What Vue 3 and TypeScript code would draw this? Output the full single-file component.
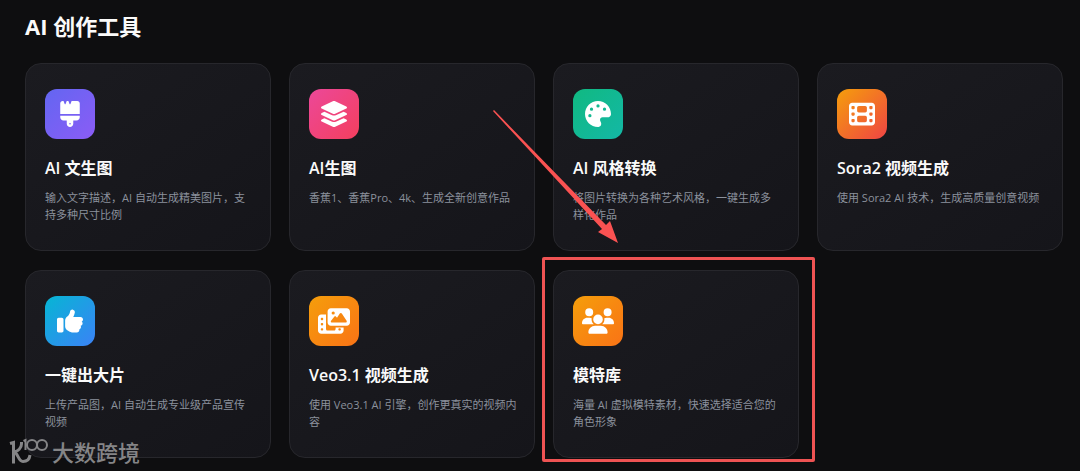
<script setup lang="ts">
interface Tool {
  name: string
  description: string
  tone: string
  viewBox: string
  icon: string
  pointer?: boolean
  highlighted?: boolean
}

const tools: Tool[] = [
  {
    name: 'AI 文生图',
    description: '输入文字描述，AI 自动生成精美图片，支持多种尺寸比例',
    tone: 'violet',
    viewBox: '0 0 384 512',
    icon: 'M162.4 6c-1.5-3.6-5-6-8.9-6h-19c-3.9 0-7.5 2.4-8.9 6L104.9 57.7c-3.2 8-14.6 8-17.8 0L66.4 6c-1.5-3.6-5-6-8.9-6H48C21.5 0 0 21.5 0 48V256H384V48c0-26.5-21.5-48-48-48H230.5c-3.9 0-7.5 2.4-8.9 6L200.9 57.7c-3.2 8-14.6 8-17.8 0L162.4 6zM0 288v32c0 35.3 28.7 64 64 64h64v64c0 35.3 28.7 64 64 64s64-28.7 64-64V384h64c35.3 0 64-28.7 64-64V288H0zM192 432a16 16 0 1 1 0 32 16 16 0 1 1 0-32z',
  },
  {
    name: 'AI生图',
    description: '香蕉1、香蕉Pro、4k、生成全新创意作品',
    tone: 'pink',
    viewBox: '0 0 576 512',
    icon: 'M264.5 5.2c14.9-6.9 32.1-6.9 47 0l218.6 101c8.5 3.9 13.9 12.4 13.9 21.8s-5.4 17.9-13.9 21.8l-218.6 101c-14.9 6.9-32.1 6.9-47 0L45.9 149.8C37.4 145.8 32 137.3 32 128s5.4-17.9 13.9-21.8L264.5 5.2zM476.9 209.6l53.2 24.6c8.5 3.9 13.9 12.4 13.9 21.8s-5.4 17.9-13.9 21.8l-218.6 101c-14.9 6.9-32.1 6.9-47 0L45.9 277.8C37.4 273.8 32 265.3 32 256s5.4-17.9 13.9-21.8l53.2-24.6 152 70.2c23.4 10.8 50.4 10.8 73.8 0l152-70.2zm-152 198.2l152-70.2 53.2 24.6c8.5 3.9 13.9 12.4 13.9 21.8s-5.4 17.9-13.9 21.8l-218.6 101c-14.9 6.9-32.1 6.9-47 0L45.9 405.8C37.4 401.8 32 393.3 32 384s5.4-17.9 13.9-21.8l53.2-24.6 152 70.2c23.4 10.8 50.4 10.8 73.8 0z',
  },
  {
    name: 'AI 风格转换',
    description: '将图片转换为各种艺术风格，一键生成多样化作品',
    tone: 'green',
    viewBox: '0 0 512 512',
    icon: 'M512 256c0 .9 0 1.8 0 2.7c-.4 36.5-33.6 61.3-70.1 61.3H344c-26.5 0-48 21.5-48 48c0 3.4 .4 6.7 1 9.9c2.1 10.2 6.5 20 10.8 29.9c6.1 13.8 12.1 27.5 12.1 42c0 31.8-21.6 60.7-53.4 62c-3.5 .1-7 .2-10.6 .2C114.6 512 0 397.4 0 256S114.6 0 256 0S512 114.6 512 256zM128 288a32 32 0 1 0 -64 0 32 32 0 1 0 64 0zm0-96a32 32 0 1 0 0-64 32 32 0 1 0 0 64zM288 96a32 32 0 1 0 -64 0 32 32 0 1 0 64 0zm96 96a32 32 0 1 0 0-64 32 32 0 1 0 0 64z',
    pointer: true,
  },
  {
    name: 'Sora2 视频生成',
    description: '使用 Sora2 AI 技术，生成高质量创意视频',
    tone: 'sunset',
    viewBox: '0 0 512 512',
    icon: 'M0 96C0 60.7 28.7 32 64 32H448c35.3 0 64 28.7 64 64V416c0 35.3-28.7 64-64 64H64c-35.3 0-64-28.7-64-64V96zM48 368v32c0 8.8 7.2 16 16 16H96c8.8 0 16-7.2 16-16V368c0-8.8-7.2-16-16-16H64c-8.8 0-16 7.2-16 16zm368-16c-8.8 0-16 7.2-16 16v32c0 8.8 7.2 16 16 16h32c8.8 0 16-7.2 16-16V368c0-8.8-7.2-16-16-16H416zM48 240v32c0 8.8 7.2 16 16 16H96c8.8 0 16-7.2 16-16V240c0-8.8-7.2-16-16-16H64c-8.8 0-16 7.2-16 16zm368-16c-8.8 0-16 7.2-16 16v32c0 8.8 7.2 16 16 16h32c8.8 0 16-7.2 16-16V240c0-8.8-7.2-16-16-16H416zM48 112v32c0 8.8 7.2 16 16 16H96c8.8 0 16-7.2 16-16V112c0-8.8-7.2-16-16-16H64c-8.8 0-16 7.2-16 16zM416 96c-8.8 0-16 7.2-16 16v32c0 8.8 7.2 16 16 16h32c8.8 0 16-7.2 16-16V112c0-8.8-7.2-16-16-16H416zM160 128v64c0 17.7 14.3 32 32 32H320c17.7 0 32-14.3 32-32V128c0-17.7-14.3-32-32-32H192c-17.7 0-32 14.3-32 32zm32 160c-17.7 0-32 14.3-32 32v64c0 17.7 14.3 32 32 32H320c17.7 0 32-14.3 32-32V320c0-17.7-14.3-32-32-32H192z',
  },
  {
    name: '一键出大片',
    description: '上传产品图，AI 自动生成专业级产品宣传视频',
    tone: 'blue',
    viewBox: '0 0 512 512',
    icon: 'M313.4 32.9c26 5.2 42.9 30.5 37.7 56.5l-2.3 11.4c-5.3 26.7-15.1 52.1-28.8 75.2H464c26.5 0 48 21.5 48 48c0 18.5-10.5 34.6-25.9 42.6C497 275.4 504 288.9 504 304c0 23.4-16.8 42.9-38.9 47.1c4.4 7.3 6.9 15.8 6.9 24.9c0 21.3-13.9 39.4-33.1 45.6c.7 3.3 1.1 6.8 1.1 10.4c0 26.5-21.5 48-48 48H294.5c-19 0-37.5-5.6-53.3-16.1l-38.5-25.7C176 420.4 160 390.4 160 358.3V247.1c0-29.2 13.3-56.7 36-75l7.4-5.9c26.5-21.2 44.6-51 51.2-84.2l2.3-11.4c5.2-26 30.5-42.9 56.5-37.7zM32 192H96c17.7 0 32 14.3 32 32V448c0 17.7-14.3 32-32 32H32c-17.7 0-32-14.3-32-32V224c0-17.7 14.3-32 32-32z',
  },
  {
    name: 'Veo3.1 视频生成',
    description: '使用 Veo3.1 AI 引擎，创作更真实的视频内容',
    tone: 'orange',
    viewBox: '0 0 640 512',
    icon: 'M256 0H576c35.3 0 64 28.7 64 64V288c0 35.3-28.7 64-64 64H256c-35.3 0-64-28.7-64-64V64c0-35.3 28.7-64 64-64zM476 106.7C471.5 100 464 96 456 96s-15.5 4-20 10.7l-56 84L362.7 169c-4.6-5.7-11.5-9-18.7-9s-14.2 3.3-18.7 9l-64 80c-5.8 7.2-6.9 17.1-2.9 25.4s12.4 13.6 21.6 13.6h80 48H552c8.9 0 17-4.9 21.2-12.7s3.7-17.3-1.2-24.6l-96-144zM336 96a32 32 0 1 0 -64 0 32 32 0 1 0 64 0zM64 128h96V384v32c0 17.7 14.3 32 32 32H320c17.7 0 32-14.3 32-32V384H512v64c0 35.3-28.7 64-64 64H64c-35.3 0-64-28.7-64-64V192c0-35.3 28.7-64 64-64zm8 64c-8.8 0-16 7.2-16 16v16c0 8.8 7.2 16 16 16H88c8.8 0 16-7.2 16-16V208c0-8.8-7.2-16-16-16H72zm0 104c-8.8 0-16 7.2-16 16v16c0 8.8 7.2 16 16 16H88c8.8 0 16-7.2 16-16V312c0-8.8-7.2-16-16-16H72zm0 104c-8.8 0-16 7.2-16 16v16c0 8.8 7.2 16 16 16H88c8.8 0 16-7.2 16-16V416c0-8.8-7.2-16-16-16H72zm336 16v16c0 8.8 7.2 16 16 16h16c8.8 0 16-7.2 16-16V416c0-8.8-7.2-16-16-16H424c-8.8 0-16 7.2-16 16z',
  },
  {
    name: '模特库',
    description: '海量 AI 虚拟模特素材，快速选择适合您的角色形象',
    tone: 'orange',
    viewBox: '0 0 640 512',
    icon: 'M144 0a80 80 0 1 1 0 160A80 80 0 1 1 144 0zM512 0a80 80 0 1 1 0 160A80 80 0 1 1 512 0zM0 298.7C0 239.8 47.8 192 106.7 192h42.7c15.9 0 31 3.5 44.6 9.7c-1.3 7.2-1.9 14.7-1.9 22.3c0 38.2 16.8 72.5 43.3 96c-.2 0-.4 0-.7 0H21.3C9.6 320 0 310.4 0 298.7zM405.3 320c-.2 0-.4 0-.7 0c26.6-23.5 43.3-57.8 43.3-96c0-7.6-.7-15-1.9-22.3c13.6-6.3 28.7-9.7 44.6-9.7h42.7C592.2 192 640 239.8 640 298.7c0 11.8-9.6 21.3-21.3 21.3H405.3zM224 224a96 96 0 1 1 192 0 96 96 0 1 1 -192 0zM128 485.3C128 411.7 187.7 352 261.3 352H378.7C452.3 352 512 411.7 512 485.3c0 14.7-11.9 26.7-26.7 26.7H154.7c-14.7 0-26.7-11.9-26.7-26.7z',
    highlighted: true,
  },
]
</script>

<template>
  <main class="page">
    <h1 class="heading">AI 创作工具</h1>
    <ul class="grid">
      <li v-for="tool in tools" :key="tool.name" class="cell">
        <a href="#" class="card">
          <span class="tile" :class="tool.tone">
            <svg class="icon" :viewBox="tool.viewBox" aria-hidden="true">
              <path :d="tool.icon" fill="currentColor" />
            </svg>
          </span>
          <h2 class="name">{{ tool.name }}</h2>
          <p class="description">{{ tool.description }}</p>
        </a>
        <svg v-if="tool.pointer" class="pointer" viewBox="0 0 126 134" aria-hidden="true">
          <path d="M0 1L1 0L113 115L117 111L125 133L105 122L109 119Z" fill="#fa5252" />
        </svg>
        <span v-if="tool.highlighted" class="highlight"></span>
      </li>
    </ul>
    <div class="watermark">
      <svg class="watermark-logo" viewBox="0 0 40 28" aria-hidden="true">
        <g fill="none" stroke="currentColor">
          <path d="M1 5.5L4.5 4.5V25.5" stroke-width="3" />
          <path d="M12.5 4V6C12.5 10 9 13.5 5 14C9 14.5 9 23.5 14 23.5C18 23.5 20.5 21 21 17" stroke-width="3" />
          <path d="M14.5 3L16.5 2V12" stroke-width="2" />
          <circle cx="23" cy="7" r="5" stroke-width="2" />
          <circle cx="33" cy="7" r="5" stroke-width="2" />
        </g>
      </svg>
      <span>大数跨境</span>
    </div>
  </main>
</template>

<style>
body {
  margin: 0;
  background: #0e0e10;
}
</style>

<style scoped>
.page {
  position: relative;
  box-sizing: border-box;
  padding: 11px 17px 14px 25px;
  font-family: "Open Sans", "Noto Sans CJK SC", sans-serif;
  color: #fafafa;
}

.heading {
  margin: 0 0 22px;
  font-size: 22px;
  line-height: 30px;
  font-weight: 700;
}

.grid {
  display: grid;
  grid-template-columns: repeat(4, minmax(0, 1fr));
  grid-auto-rows: 1fr;
  gap: 19px 18px;
  margin: 0;
  padding: 0;
  list-style: none;
}

.cell {
  position: relative;
  display: flex;
}

.card {
  flex: 1;
  box-sizing: border-box;
  min-width: 0;
  padding: 25px 17px 27px 19px;
  border: 1px solid #27272c;
  border-radius: 16px;
  background: linear-gradient(145deg, #1b1b20, #15151a);
  color: inherit;
  text-decoration: none;
}

.tile {
  display: flex;
  align-items: center;
  justify-content: center;
  width: 50px;
  height: 50px;
  border-radius: 12px;
  color: #fff;
}

.icon {
  width: 32px;
  height: 26px;
}

.violet { background: linear-gradient(135deg, #6366f1, #8b5cf6); }
.pink { background: linear-gradient(135deg, #ec4899, #f43f5e); }
.green { background: linear-gradient(135deg, #10b981, #14b8a6); }
.sunset { background: linear-gradient(135deg, #f59e0b, #ef4444); }
.blue { background: linear-gradient(135deg, #06b6d4, #3b82f6); }
.orange { background: linear-gradient(135deg, #f59e0b, #f97316); }

.name {
  margin: 17px 0 9px;
  font-size: 16px;
  line-height: 24px;
  font-weight: 600;
}

.description {
  margin: 0;
  font-size: 11px;
  line-height: 17px;
  color: #8b919c;
}

.pointer {
  position: absolute;
  z-index: 2;
  top: 47px;
  left: -60px;
  width: 126px;
  height: 134px;
  pointer-events: none;
}

.highlight {
  position: absolute;
  z-index: 2;
  inset: -13px -16px -4px -11px;
  border: 3px solid #ee5353;
  border-radius: 2px;
  pointer-events: none;
}

.watermark {
  position: absolute;
  left: 9px;
  bottom: 5px;
  display: flex;
  align-items: center;
  gap: 3px;
  font-size: 22px;
  line-height: 30px;
  font-weight: 500;
  color: #858587;
  pointer-events: none;
}

.watermark-logo {
  width: 40px;
  height: 28px;
}
</style>
